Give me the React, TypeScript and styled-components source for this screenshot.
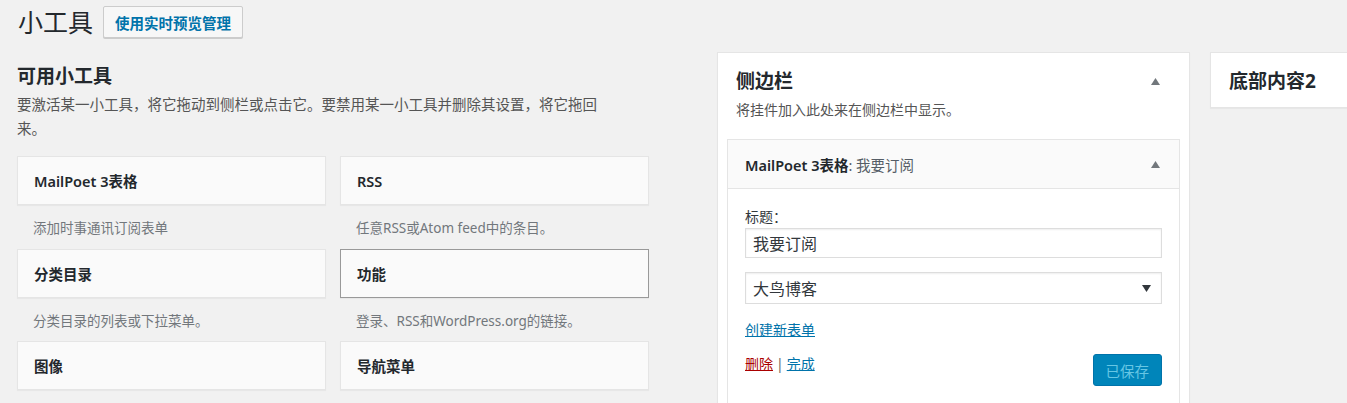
import React from 'react';
import styled, { createGlobalStyle } from 'styled-components';

const GlobalStyle = createGlobalStyle`
  html, body {
    margin: 0;
    background: #f1f1f1;
    overflow: hidden;
  }
  body {
    font-family: "Noto Sans", "Noto Sans CJK SC", sans-serif;
    color: #23282d;
    font-size: 13px;
  }
  * { box-sizing: border-box; }
`;

const Header = styled.div`
  display: flex;
  align-items: center;
  height: 38px;
  padding: 6px 0 0 18px;
`;

const PageTitle = styled.h1`
  margin: 0;
  font-size: 25px;
  font-weight: 400;
  line-height: 32px;
  color: #23282d;
`;

const PageButton = styled.button`
  margin-left: 10px;
  height: 32px;
  padding: 0 11px;
  border: 1px solid #ccc;
  border-radius: 2px;
  background: #f7f7f7;
  color: #0073aa;
  font-family: inherit;
  font-size: 14.5px;
  font-weight: 700;
  box-shadow: 0 1px 0 #ccc;
`;

const Columns = styled.div`
  display: flex;
  align-items: flex-start;
  margin-top: 14px;
`;

const Available = styled.div`
  margin-left: 17px;
  width: 632px;
  flex-shrink: 0;
`;

const SectionHeading = styled.h2`
  margin: 12px 0 4px;
  font-size: 19px;
  font-weight: 700;
  line-height: 24px;
`;

const Intro = styled.p`
  margin: 0 0 16px;
  width: 590px;
  font-size: 14.5px;
  line-height: 24px;
  color: #555;
`;

const WidgetGrid = styled.div`
  display: grid;
  grid-template-columns: 309px 309px;
  column-gap: 14px;
`;

const WidgetCard = styled.div<{ $active?: boolean }>`
  display: flex;
  align-items: center;
  height: 49px;
  padding: 0 16px;
  border: 1px solid ${(p) => (p.$active ? '#999' : '#e5e5e5')};
  background: #fafafa;
  box-shadow: 0 1px 1px rgba(0, 0, 0, 0.04);
  font-size: 14.5px;
  font-weight: 600;
`;

const WidgetDesc = styled.div`
  height: 43.5px;
  padding: 13px 0 0 16px;
  font-size: 13.5px;
  line-height: 20px;
  color: #72777c;
`;

const Panel = styled.div<{ $width: number }>`
  flex-shrink: 0;
  width: ${(p) => p.$width}px;
  background: #fff;
  border: 1px solid #e5e5e5;
  box-shadow: 0 1px 1px rgba(0, 0, 0, 0.04);
`;

const SidebarPanel = styled(Panel)`
  margin-left: 68px;
  padding-bottom: 40px;
`;

const FooterPanel = styled(Panel)`
  margin-left: 20px;
  padding: 16px 18px 14px;
`;

const PanelHead = styled.div<{ $right: number }>`
  display: flex;
  align-items: center;
  justify-content: space-between;
  padding: 16px ${(p) => p.$right}px 0 18px;
`;

const PanelTitle = styled.h3`
  margin: 0;
  font-size: 19px;
  font-weight: 700;
  line-height: 24px;
`;

const PanelDesc = styled.p`
  margin: 7px 0 0 18px;
  font-size: 14px;
  line-height: 20px;
  color: #555;
`;

const InnerWidget = styled.div`
  margin: 19px 9px 0;
  border: 1px solid #e5e5e5;
`;

const InnerHead = styled.div`
  display: flex;
  align-items: center;
  justify-content: space-between;
  height: 49px;
  padding: 0 19px 0 17px;
  background: #fafafa;
  border-bottom: 1px solid #e5e5e5;
  font-size: 14.5px;
`;

const InnerName = styled.span`
  font-weight: 600;
  color: #23282d;
`;

const InnerSub = styled.span`
  font-weight: 400;
  color: #555d66;
`;

const InnerBody = styled.div`
  padding: 18px 17px 20px;
  background: #fff;
`;

const Label = styled.div`
  font-size: 14px;
  line-height: 20px;
  color: #32373c;
`;

const Field = styled.div<{ $height: number; $gap: number }>`
  display: flex;
  align-items: center;
  justify-content: space-between;
  height: ${(p) => p.$height}px;
  margin-top: ${(p) => p.$gap}px;
  padding: 0 10px 0 7px;
  border: 1px solid #ddd;
  box-shadow: inset 0 1px 2px rgba(0, 0, 0, 0.07);
  font-size: 16px;
  color: #32373c;
`;

const Link = styled.a<{ $danger?: boolean }>`
  color: ${(p) => (p.$danger ? '#a00' : '#0073aa')};
  text-decoration: underline;
  font-size: 14px;
  line-height: 20px;
`;

const CreateLink = styled.div`
  margin-top: 16px;
  line-height: 20px;
`;

const Actions = styled.div`
  display: flex;
  justify-content: space-between;
  align-items: flex-start;
  margin-top: 14px;
`;

const Sep = styled.span`
  margin: 0 3px;
  color: #666;
  font-size: 14px;
`;

const SaveButton = styled.button`
  height: 32px;
  padding: 0 12px;
  border: 1px solid #0073aa;
  border-radius: 3px;
  background: #0085ba;
  color: #66c6e4;
  font-family: inherit;
  font-size: 14.5px;
`;

const Triangle = ({ down, color = '#72777c' }: { down?: boolean; color?: string }) => (
  <svg width="9" height="7" viewBox="0 0 9 7">
    <polygon points={down ? '0,0 9,0 4.5,7' : '0,7 9,7 4.5,0'} fill={color} />
  </svg>
);

// last row's descriptions sit below the fold in the reference
const widgets = [
  { title: 'MailPoet 3表格', desc: '添加时事通讯订阅表单' },
  { title: 'RSS', desc: '任意RSS或Atom feed中的条目。' },
  { title: '分类目录', desc: '分类目录的列表或下拉菜单。' },
  { title: '功能', desc: '登录、RSS和WordPress.org的链接。', active: true },
  { title: '图像' },
  { title: '导航菜单' },
];

export default function App() {
  return (
    <>
      <GlobalStyle />
      <Header>
        <PageTitle>小工具</PageTitle>
        <PageButton>使用实时预览管理</PageButton>
      </Header>
      <Columns>
        <Available>
          <SectionHeading>可用小工具</SectionHeading>
          <Intro>
            要激活某一小工具，将它拖动到侧栏或点击它。要禁用某一小工具并删除其设置，将它拖回来。
          </Intro>
          <WidgetGrid>
            {widgets.map((w) => (
              <div key={w.title}>
                <WidgetCard $active={w.active}>{w.title}</WidgetCard>
                {w.desc && <WidgetDesc>{w.desc}</WidgetDesc>}
              </div>
            ))}
          </WidgetGrid>
        </Available>

        <SidebarPanel $width={473}>
          <PanelHead $right={29}>
            <PanelTitle>侧边栏</PanelTitle>
            <Triangle />
          </PanelHead>
          <PanelDesc>将挂件加入此处来在侧边栏中显示。</PanelDesc>
          <InnerWidget>
            <InnerHead>
              <span>
                <InnerName>MailPoet 3表格</InnerName>
                <InnerSub>: 我要订阅</InnerSub>
              </span>
              <Triangle />
            </InnerHead>
            <InnerBody>
              <Label>标题：</Label>
              <Field $height={30} $gap={1}>我要订阅</Field>
              <Field $height={32} $gap={14}>
                大鸟博客
                <Triangle down color="#32373c" />
              </Field>
              <CreateLink>
                <Link href="#">创建新表单</Link>
              </CreateLink>
              <Actions>
                <span>
                  <Link $danger href="#">删除</Link>
                  <Sep>|</Sep>
                  <Link href="#">完成</Link>
                </span>
                <SaveButton disabled>已保存</SaveButton>
              </Actions>
            </InnerBody>
          </InnerWidget>
        </SidebarPanel>

        <FooterPanel $width={200}>
          <PanelTitle>底部内容2</PanelTitle>
        </FooterPanel>
      </Columns>
    </>
  );
}
